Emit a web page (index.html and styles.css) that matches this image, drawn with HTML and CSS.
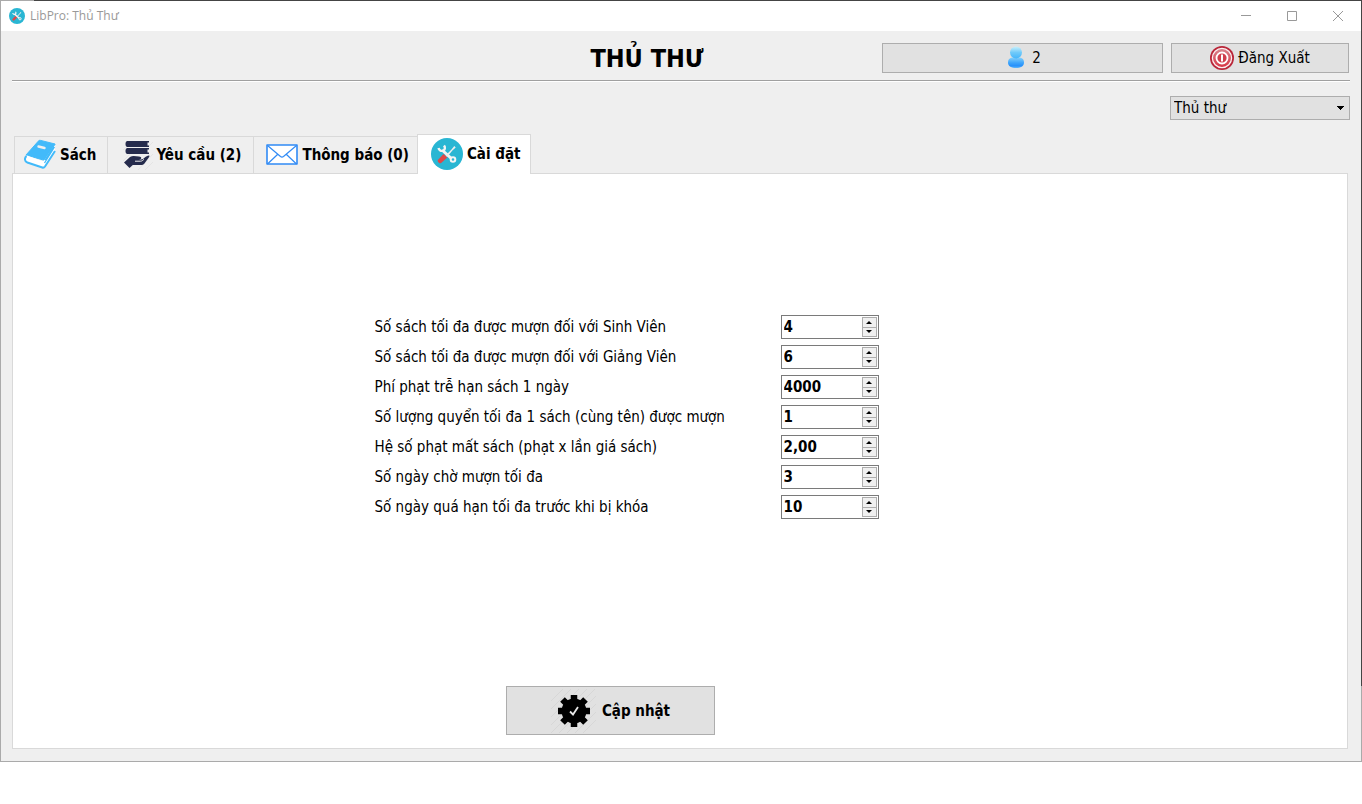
FILE: index.html
```html
<!DOCTYPE html>
<html lang="vi">
<head>
<meta charset="utf-8">
<title>LibPro: Thủ Thư</title>
<link rel="stylesheet" href="styles.css">
</head>
<body>
<svg class="symbols" aria-hidden="true">
  <symbol id="tools" viewBox="0 0 32 32">
    <circle cx="16" cy="16" r="16" fill="#29b6d3"/>
    <path d="M11 12 21 21" stroke="#f4f4f4" stroke-width="3"/>
    <path d="M7.500 10c.5 2.500 3 3.500 5 2.500 1.500-1 2-3 .5-5" fill="none" stroke="#f4f4f4" stroke-width="2.400"/>
    <circle cx="22" cy="21.500" r="2.300" fill="#29b6d3" stroke="#f4f4f4" stroke-width="2"/>
    <path d="m14.500 17.500 6-6 2.800-3.500 1.400 1.400-3.300 3.100-5.400 6.500z" fill="#eee"/>
    <path d="m12.500 16 3.800 3.500-6.200 5.600c-1.500 1-4.300-1.400-3.200-3z" fill="#e04848"/>
  </symbol>
</svg>
<div class="window">
  <header class="titlebar">
    <svg class="app-icon" aria-hidden="true"><use href="#tools"/></svg>
    <span class="app-name">LibPro: Thủ Thư</span>
    <div class="window-controls">
      <button type="button" aria-label="Thu nhỏ"><svg viewBox="0 0 12 12"><path d="M1 5.500h10"/></svg></button>
      <button type="button" aria-label="Phóng to"><svg viewBox="0 0 12 12"><path d="M1.500 1.500h9v9h-9z"/></svg></button>
      <button type="button" aria-label="Đóng"><svg viewBox="0 0 12 12"><path d="m1 1 10 10M11 1 1 11"/></svg></button>
    </div>
  </header>
  <div class="content">
    <div class="header">
      <h1 class="heading">THỦ THƯ</h1>
      <button class="button" type="button">
        <svg class="icon-user" viewBox="0 0 24 24" aria-hidden="true">
          <defs>
            <linearGradient id="head" x2="0" y2="1"><stop offset="0" stop-color="#c9f0fb"/><stop offset=".5" stop-color="#70cafa"/><stop offset="1" stop-color="#45b5fb"/></linearGradient>
            <linearGradient id="torso" x2="0" y2="1"><stop offset="0" stop-color="#84d1fb"/><stop offset=".5" stop-color="#3fa5fb"/><stop offset=".8" stop-color="#2790fb"/><stop offset="1" stop-color="#62b9fb"/></linearGradient>
          </defs>
          <path d="M8 11.500C5 12 4 14 4 16.500c0 4 3.500 5.500 8 5.500s8-1.500 8-5.500c0-2.500-1-4.500-4-5z" fill="url(#torso)"/>
          <ellipse cx="12" cy="6.500" rx="6" ry="6" fill="url(#head)"/>
        </svg>
        <span>2</span>
      </button>
      <button class="button logout" type="button">
        <svg class="icon-power" viewBox="0 0 24 24" aria-hidden="true">
          <defs><linearGradient id="power" x2="0" y2="1"><stop offset="0" stop-color="#d88790"/><stop offset="1" stop-color="#d83343"/></linearGradient></defs>
          <circle cx="12" cy="12" r="12" fill="#b92639"/>
          <circle cx="12" cy="12" r="9.600" fill="url(#power)" stroke="#fbeff0" stroke-width="1.300"/>
          <circle cx="12" cy="12" r="5.500" fill="#cf3e4d" stroke="#fff" stroke-width="1.800"/>
          <path d="M12 8.500v7" stroke="#fff" stroke-width="2"/>
        </svg>
        <span>Đăng Xuất</span>
      </button>
    </div>
    <div class="toolbar">
      <select class="role" aria-label="Vai trò"><option>Thủ thư</option></select>
    </div>
    <nav class="tabs" role="tablist">
      <button class="tab" type="button" role="tab" aria-selected="false">
        <svg viewBox="0 0 32 32" aria-hidden="true">
          <path d="M14 2.500c.6-1 1.500-1.400 2.600-1.100L31 5 21 21.500 2 16z" fill="#42bafa" stroke="#42bafa" stroke-linejoin="round"/>
          <path d="m14.500 7.500 6 1.500" stroke="#efefef" stroke-width="2.400" stroke-linecap="round"/>
          <path d="M3 16.500c-3 2-2.500 6 .5 7L18.500 28c1 .3 2-.2 2.600-1L31 11.500V5L20.500 21c-.5.800-1.500 1.200-2.500.900z" fill="#fff"/>
          <path d="M2.500 17c-2.300 2-2 5.700.8 6.500l15 5c1 .3 2 0 2.700-1L31 12" fill="none" stroke="#42bafa" stroke-width="2"/>
          <path d="M31 5 21 21M30.500 8l-10 16" stroke="#42bafa" stroke-width="1.300"/>
        </svg>
        <span>Sách</span>
      </button>
      <button class="tab tab-requests" type="button" role="tab" aria-selected="false">
        <svg viewBox="0 0 32 32" aria-hidden="true">
          <path d="m1 11 10-9M1 22 8 15M16 31 31 15M23 31l8-8M27 7l4-4" stroke="#e5e5e5"/>
          <path d="M5 2h22v1.500h-1.500v3H27V8H5C3 7.500 3 2.500 5 2zM5 9h22v1.500h-1.500v3H27V15H5c-2-.5-2-5.500 0-6z" fill="#252b4c"/>
          <path d="M2 23.500 8 18c3-2 6-.5 9-.500 3 0 3 3 0 3h-4 6c3 0 4.500-4 8-4 .8.300.5 1-.2 2l-4 5.500c-1 1.500-2 2-4 2h-8L7.500 29z" fill="#252b4c"/>
          <path d="M13 22.200h5.500c1.500 0 2.500-1 3.500-2" stroke="#efefef" fill="none"/>
        </svg>
        <span>Yêu cầu (2)</span>
      </button>
      <button class="tab tab-notices" type="button" role="tab" aria-selected="false">
        <svg viewBox="0 0 32 32" aria-hidden="true">
          <path d="M1 6h30v19H1z" fill="#fff" stroke="#318bf5" stroke-width="1.600" stroke-linejoin="round"/>
          <path d="m1.500 6.500 13 11q1.500 1.200 3 0l13-11M1.500 25 11.500 15.500M30.500 25l-10-9.500" fill="none" stroke="#318bf5" stroke-width="1.200"/>
        </svg>
        <span>Thông báo (0)</span>
      </button>
      <button class="tab tab-active" type="button" role="tab" aria-selected="true">
        <svg aria-hidden="true"><use href="#tools"/></svg>
        <span>Cài đặt</span>
      </button>
    </nav>
    <main class="panel">
      <form class="settings">
        <div class="fields">
          <label for="f1">Số sách tối đa được mượn đối với Sinh Viên</label>
          <div class="spin"><input id="f1" type="text" value="4"><div class="steps"><button type="button" class="up" aria-label="Tăng"></button><button type="button" class="down" aria-label="Giảm"></button></div></div>
          <label for="f2">Số sách tối đa được mượn đối với Giảng Viên</label>
          <div class="spin"><input id="f2" type="text" value="6"><div class="steps"><button type="button" class="up" aria-label="Tăng"></button><button type="button" class="down" aria-label="Giảm"></button></div></div>
          <label for="f3">Phí phạt trễ hạn sách 1 ngày</label>
          <div class="spin"><input id="f3" type="text" value="4000"><div class="steps"><button type="button" class="up" aria-label="Tăng"></button><button type="button" class="down" aria-label="Giảm"></button></div></div>
          <label for="f4">Số lượng quyển tối đa 1 sách (cùng tên) được mượn</label>
          <div class="spin"><input id="f4" type="text" value="1"><div class="steps"><button type="button" class="up" aria-label="Tăng"></button><button type="button" class="down" aria-label="Giảm"></button></div></div>
          <label for="f5">Hệ số phạt mất sách (phạt x lần giá sách)</label>
          <div class="spin"><input id="f5" type="text" value="2,00"><div class="steps"><button type="button" class="up" aria-label="Tăng"></button><button type="button" class="down" aria-label="Giảm"></button></div></div>
          <label for="f6">Số ngày chờ mượn tối đa</label>
          <div class="spin"><input id="f6" type="text" value="3"><div class="steps"><button type="button" class="up" aria-label="Tăng"></button><button type="button" class="down" aria-label="Giảm"></button></div></div>
          <label for="f7">Số ngày quá hạn tối đa trước khi bị khóa</label>
          <div class="spin"><input id="f7" type="text" value="10"><div class="steps"><button type="button" class="up" aria-label="Tăng"></button><button type="button" class="down" aria-label="Giảm"></button></div></div>
        </div>
        <button class="button update" type="button">
          <svg viewBox="0 0 48 48" aria-hidden="true">
            <path d="M1 14 13 2M1 22 21 2M1 30 29 2M1 38 37 2M1 46 45 2M9 46 46 9M17 46l29-29M25 46l21-21M33 46l13-13" stroke="#d7d7d7"/>
            <circle cx="24" cy="24" r="12.500"/>
            <path d="M24 8v32M8 24h32M12.500 12.500l23 23M35.500 12.500l-23 23" stroke="#000" stroke-width="6.500"/>
            <path d="m20 24.500 3 3 5-7.500" fill="none" stroke="#e8e8e8" stroke-width="1.800"/>
          </svg>
          <span>Cập nhật</span>
        </button>
      </form>
    </main>
  </div>
</div>
</body>
</html>
```
FILE: styles.css
```css
* { box-sizing: border-box; }

body {
  margin: 0;
  background: #fff;
  color: #000;
  font: 15px/20px "DejaVu Sans Condensed", "DejaVu Sans", sans-serif;
}

button, input, select {
  margin: 0;
  padding: 0;
  color: inherit;
  font: inherit;
}

.symbols { position: absolute; width: 0; height: 0; }

.window {
  display: flex;
  flex-direction: column;
  min-height: calc(100vh - 42px);
  padding: 1px;
  background:
    linear-gradient(90deg, #aaa 34px, #444 34px) top / 100% 1px no-repeat,
    linear-gradient(#aaa, #aaa) bottom / 100% 1px no-repeat,
    linear-gradient(#444 90%, #aaa 90%) right / 1px 100% no-repeat,
    linear-gradient(#aaa, #aaa) left / 1px 100% no-repeat,
    #efefef;
}

.titlebar {
  display: flex;
  align-items: center;
  height: 30px;
  padding-left: 8px;
  background: #fff;
  color: #999;
  font: 12px/16px "Open Sans", sans-serif;
}

.app-icon { width: 16px; height: 16px; margin-right: 5px; }

.window-controls { display: flex; margin-left: auto; }

.window-controls button {
  display: flex;
  align-items: center;
  justify-content: center;
  width: 46px;
  height: 28px;
  border: 0;
  background: none;
}

.window-controls svg { width: 12px; height: 12px; fill: none; stroke: #999; }

.content {
  display: flex;
  flex: 1;
  flex-direction: column;
  padding: 12px 11px 12px;
}

.header {
  display: grid;
  grid-template-columns: 454fr 281fr 178fr;
  gap: 8px;
  align-items: center;
  padding: 0 1px 7px 30.5%;
  border-bottom: 1px solid #a0a0a0;
  box-shadow: 0 1px #fff;
}

.heading {
  margin: 0;
  padding-top: 2px;
  font-size: 25px;
  line-height: 28px;
  text-align: center;
}

.button {
  display: flex;
  align-items: center;
  justify-content: center;
  height: 30px;
  border: 1px solid #adadad;
  background: #e1e1e1;
}

.icon-user { width: 24px; height: 24px; margin-right: 4px; }
.icon-power { width: 24px; height: 24px; margin-right: 4px; }

.toolbar { display: flex; justify-content: flex-end; padding: 15px 0 14px; }

.role {
  width: 180px;
  height: 24px;
  padding: 0 3px;
  appearance: none;
  border: 1px solid #adadad;
  border-radius: 0;
  background:
    linear-gradient(45deg, transparent 50%, #000 50%) right 9px center / 4px 4px no-repeat,
    linear-gradient(-45deg, transparent 50%, #000 50%) right 5px center / 4px 4px no-repeat,
    #e1e1e1;
}

.tabs { display: flex; align-items: flex-end; padding-left: 2px; }

.tab {
  display: flex;
  align-items: center;
  gap: 4px;
  height: 37px;
  padding: 0 11px 0 9px;
  border: 1px solid #d9d9d9;
  border-width: 1px 0 0 1px;
  background: #efefef;
  font-weight: bold;
}

.tab svg { width: 32px; height: 32px; }
.tab-requests { gap: 2px; padding: 0 12px 0 14px; }
.tab-notices { padding: 0 8px 0 12px; }

.tab-active {
  z-index: 1;
  height: 40px;
  margin-bottom: -1px;
  padding: 0 10px 2px 13px;
  border-right-width: 1px;
  background: #fff;
}

.panel {
  display: flex;
  flex: 1;
  margin-right: 2px;
  border: 1px solid #d9d9d9;
  background: #fff;
}

.settings {
  display: flex;
  flex: 1;
  flex-direction: column;
  justify-content: space-between;
  padding: 141px 20px 13px 27.1%;
}

.fields {
  display: grid;
  grid-template-columns: 406px 98px;
  row-gap: 6px;
  align-items: center;
}

.spin {
  display: flex;
  height: 24px;
  padding: 1px;
  border: 1px solid #7a7a7a;
  background: #fff;
}

.spin input {
  flex: 1;
  min-width: 0;
  padding-left: 1px;
  border: 0;
  outline: 0;
  background: none;
  font-weight: bold;
}

.steps { display: flex; flex-direction: column; width: 15px; }

.steps button {
  flex: 1;
  border: 1px solid #adadad;
  background: #f0f0f0;
}

.steps .down { border-top: 0; }

.steps button::before {
  display: block;
  width: 0;
  margin: 0 auto;
  border: 3px solid transparent;
  content: "";
}

.steps .up::before { border-top: 0; border-bottom-color: #000; }
.steps .down::before { border-bottom: 0; border-top-color: #000; }

.update {
  gap: 4px;
  width: 209px;
  height: 49px;
  margin-left: 131px;
  font-weight: bold;
}

.update svg { width: 48px; height: 48px; }
```
